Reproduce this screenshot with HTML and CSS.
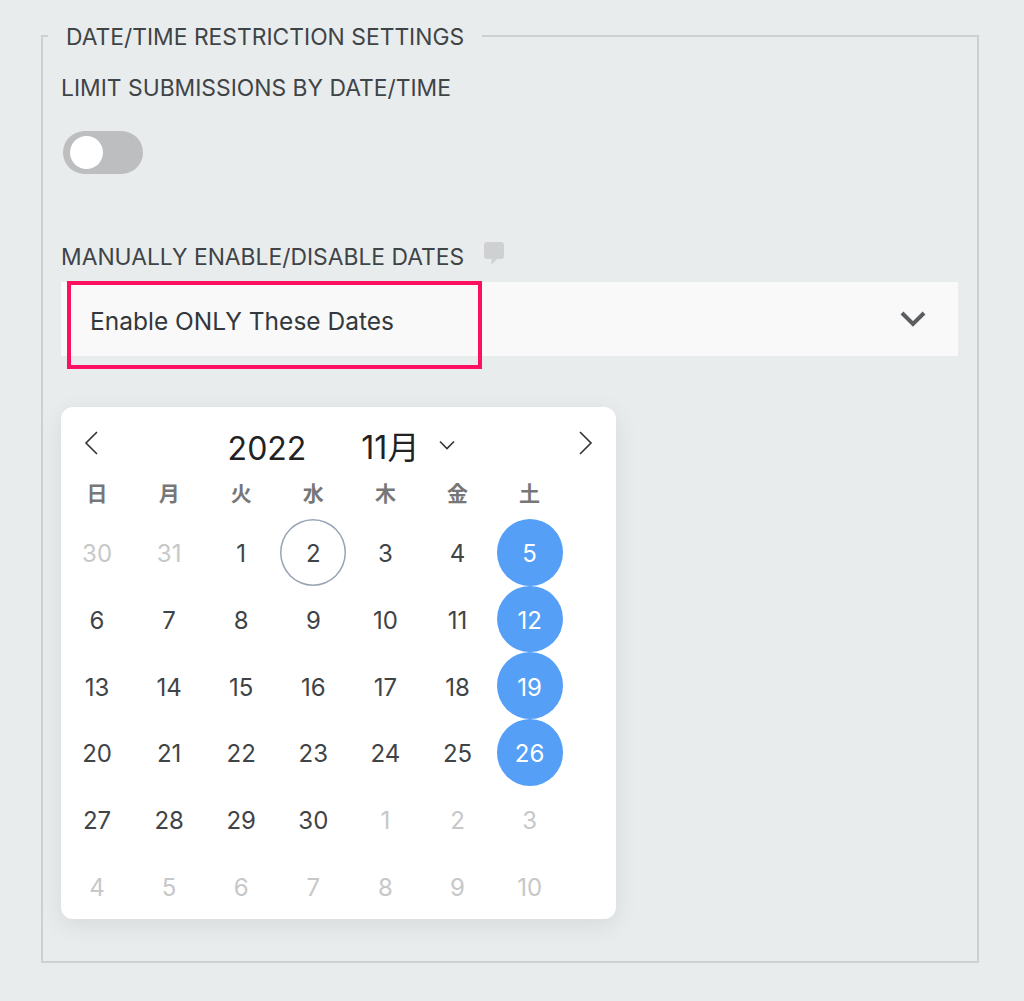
FILE: index.html
```html
<!DOCTYPE html>
<html lang="ja">
<head>
    <meta charset="UTF-8">
    <title>Date/Time Restriction Settings</title>
    <link rel="stylesheet" href="styles.css">
</head>
<body>
    <fieldset class="settings">
        <legend>DATE/TIME RESTRICTION SETTINGS</legend>

        <p class="label limit-label">LIMIT SUBMISSIONS BY DATE/TIME</p>
        <div class="toggle"><span class="knob"></span></div>

        <div class="label-row">
            <p class="label">MANUALLY ENABLE/DISABLE DATES</p>
            <svg class="hint" width="20" height="23" viewBox="0 0 20 23">
                <path d="M3 0h14a3 3 0 0 1 3 3v11a3 3 0 0 1-3 3h-4l-6 6 1-6H3a3 3 0 0 1-3-3V3a3 3 0 0 1 3-3z" fill="#cfd0d1"/>
            </svg>
        </div>

        <div class="select">
            <span>Enable ONLY These Dates</span>
            <svg width="28" height="18" viewBox="0 0 28 18">
                <path d="M3 3l11 11L25 3" fill="none" stroke="#5b5e60" stroke-width="4"/>
            </svg>
            <div class="highlight"></div>
        </div>

        <div class="calendar">
            <div class="cal-header">
                <svg width="14" height="24" viewBox="0 0 14 24">
                    <path d="M13 1L2 12l11 11" fill="none" stroke="#333" stroke-width="1.6"/>
                </svg>
                <div class="cal-title">
                    <span class="year">2022</span>
                    <span class="month">11月</span>
                    <svg class="month-arrow" width="16" height="10" viewBox="0 0 16 10">
                        <path d="M1 1.5l7 7 7-7" fill="none" stroke="#333" stroke-width="1.6"/>
                    </svg>
                </div>
                <svg width="14" height="24" viewBox="0 0 14 24">
                    <path d="M1 1l11 11L1 23" fill="none" stroke="#333" stroke-width="1.6"/>
                </svg>
            </div>
            <div class="weekdays">
                <span>日</span><span>月</span><span>火</span><span>水</span><span>木</span><span>金</span><span>土</span>
            </div>
            <div class="days">
                <span class="off">30</span><span class="off">31</span><span>1</span><span class="today">2</span><span>3</span><span>4</span><span class="on">5</span>
                <span>6</span><span>7</span><span>8</span><span>9</span><span>10</span><span>11</span><span class="on">12</span>
                <span>13</span><span>14</span><span>15</span><span>16</span><span>17</span><span>18</span><span class="on">19</span>
                <span>20</span><span>21</span><span>22</span><span>23</span><span>24</span><span>25</span><span class="on">26</span>
                <span>27</span><span>28</span><span>29</span><span>30</span><span class="off">1</span><span class="off">2</span><span class="off">3</span>
                <span class="off">4</span><span class="off">5</span><span class="off">6</span><span class="off">7</span><span class="off">8</span><span class="off">9</span><span class="off">10</span>
            </div>
        </div>
    </fieldset>
</body>
</html>
```

FILE: styles.css
```css
html, body {
    margin: 0;
    height: 1001px;
    overflow: hidden;
}
body {
    background: #e9eced;
    color: #3f4447;
    font-family: 'Inter', 'Noto Sans CJK JP', sans-serif;
    padding: 22px 45px 0 41px;
    box-sizing: border-box;
}
.settings {
    margin: 0;
    padding: 0 19px 0 18px;
    border: 2px solid #cdd1d3;
    height: 941px;
    box-sizing: border-box;
}
.settings legend {
    margin-left: -13px;
    padding: 2px 18px 0;
    font-size: 22.85px;
    line-height: 26px;
}
.label {
    margin: 0;
    font-size: 22.85px;
    line-height: 26px;
}
.limit-label {
    margin-top: 25px;
}
.toggle {
    width: 80px;
    height: 43px;
    margin: 30px 0 0 2px;
    padding: 5px 7px;
    box-sizing: border-box;
    background: #bdbec0;
    border-radius: 22px;
}
.knob {
    display: block;
    width: 33px;
    height: 33px;
    background: #fff;
    border-radius: 50%;
}
.label-row {
    display: flex;
    align-items: flex-start;
    gap: 20px;
    margin-top: 70px;
}
.hint {
    margin-top: -2px;
}
.select {
    position: relative;
    display: flex;
    align-items: center;
    justify-content: space-between;
    height: 74px;
    margin-top: 12px;
    padding: 0 31px 0 29px;
    background: #f9f9f9;
    color: #32383c;
    font-size: 24.5px;
}
.select span {
    padding-top: 4px;
}
.highlight {
    position: absolute;
    left: 6px;
    top: -1px;
    width: 415px;
    height: 88px;
    border: 4px solid #ff0f5f;
    box-sizing: border-box;
}
.calendar {
    width: 555px;
    height: 512px;
    margin-top: 51px;
    background: #fff;
    border-radius: 12px;
    box-shadow: 0 6px 24px rgba(0, 0, 0, 0.08);
}
.cal-header {
    display: flex;
    align-items: flex-start;
    justify-content: space-between;
    padding: 24px 23px 0 23px;
    height: 38px;
    color: #222;
}
.cal-title {
    display: flex;
    align-items: center;
    margin: -4px 0 0 6px;
    font-size: 32px;
    line-height: 40px;
}
.year {
    margin-right: 55px;
    margin-top: 2px;
}
.month {
    margin-right: 20px;
}
.month-arrow {
    margin-bottom: 6px;
}
.weekdays, .days {
    display: grid;
    grid-template-columns: repeat(7, 72.1px);
    justify-items: center;
}
.weekdays {
    height: 46px;
    margin-bottom: 4px;
    align-items: center;
    color: #777;
    font-size: 21px;
    font-weight: 700;
}
.days span {
    width: 66px;
    height: 66.7px;
    padding-top: 3px;
    box-sizing: border-box;
    display: flex;
    align-items: center;
    justify-content: center;
    border-radius: 50%;
    font-size: 24px;
}
.days .off {
    color: #c6c8c9;
}
.days .today {
    box-shadow: inset 0 0 0 1.5px #98a4b6;
}
.days .on {
    background: #559ff7;
    color: #fff;
}
```
